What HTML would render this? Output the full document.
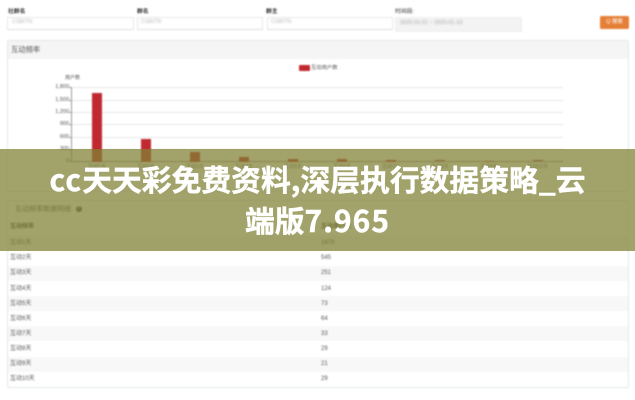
<!DOCTYPE html>
<html lang="zh">
<head>
<meta charset="utf-8">
<style>
html,body{margin:0;padding:0;width:635px;height:400px;overflow:hidden;background:#fff}
body{position:relative;font-family:"Liberation Sans","Noto Sans CJK SC",sans-serif}
#page{position:absolute;left:0;top:0;width:635px;height:400px;filter:blur(.7px);color:#555}
#page div,#page span{position:absolute;white-space:nowrap}
.lb{font-size:5.8px;font-weight:bold;color:#333;top:8px;line-height:7px}
.in{top:17px;height:11px;border:1px solid #e8e8e8;border-bottom:1px solid #dedede;background:#fff}
.ph{top:19px;font-size:5.5px;line-height:7px;color:#b5b5b5;filter:blur(.7px)}
.pn{left:7px;width:620px;border:1px solid #e4e6e6;border-radius:2px;box-sizing:content-box}
.g{left:72px;width:491px;height:1px;background:#e6e6e6}
.y{left:40px;width:29px;text-align:right;font-size:5.5px;line-height:7px;color:#555}
.t{left:69px;width:3px;height:1px;background:#999}
.b{width:10px;background:#c0292f}
.x{font-size:5px;line-height:6px;color:#777;width:40px;text-align:center;top:164px}
.r{left:8px;width:620px;height:15.2px}
.s{background:#f8f8f8}
.c1{left:10px;font-size:6px;line-height:7px;color:#555}
.c2{left:321px;font-size:6px;line-height:7px;color:#555}
#band{position:absolute;left:0;top:149px;width:635px;height:102px;background:rgba(127,129,52,.73)}
#title{position:absolute;left:0;top:158px;width:635px;text-align:center;color:#fff;font-weight:bold;font-size:29.8px;line-height:41px;font-family:"Noto Sans CJK SC","Liberation Sans",sans-serif;-webkit-text-stroke:.45px #fff;filter:blur(.3px)}
#title div{white-space:nowrap}
#title .w{letter-spacing:1.1px}
</style>
</head>
<body>
<div id="page">
  <div class="lb" style="left:8px;top:8.500px">社群名</div>
  <div class="lb" style="left:137px;top:8.500px">群名</div>
  <div class="lb" style="left:266px;top:8.500px">群主</div>
  <div class="lb" style="left:395px;top:8.500px;font-weight:normal">时间段:</div>
  <div class="in" style="left:7px;width:125px"></div>
  <div class="in" style="left:137px;width:124px"></div>
  <div class="in" style="left:267px;width:124px"></div>
  <div class="in" style="left:395px;width:125px;height:13px;background:#f3f3f3;border-color:#efefef"></div>
  <div class="ph" style="left:12px">CSBITN</div>
  <div class="ph" style="left:141px">CSBITN</div>
  <div class="ph" style="left:271px">CSBITN</div>
  <div class="ph" style="left:400px;top:20px;color:#a5a5a5">2020-01-01 ~ 2020-01-10</div>
  <div style="left:600px;top:16px;width:29px;height:13px;background:#e57f36;border-radius:1.5px;color:#fff;font-size:5.5px;line-height:13px;text-align:center">Q 搜索</div>

  <div class="pn" style="top:40px;height:150px"></div>
  <div style="left:8px;top:41px;width:620px;height:18px;background:#f5f5f5"></div>
  <div style="left:11px;top:45px;font-size:7.300px;line-height:10px;color:#555">互动频率</div>

  <div style="left:299px;top:65px;width:11px;height:6px;background:#c0292f;border-radius:1px"></div>
  <div style="left:311px;top:65px;font-size:5.300px;line-height:7px;color:#555">互动用户数</div>
  <div style="left:65px;top:75px;font-size:5px;line-height:7px;color:#555">用户数</div>

  <div class="g" style="top:87px"></div>
  <div class="g" style="top:100px"></div>
  <div class="g" style="top:112px"></div>
  <div class="g" style="top:124px"></div>
  <div class="g" style="top:137px"></div>
  <div class="g" style="top:149px"></div>
  <div class="g" style="top:161px;background:#999"></div>
  <div style="left:71px;top:87px;width:1px;height:75px;background:#999"></div>
  <div class="t" style="top:87px"></div><div class="t" style="top:100px"></div><div class="t" style="top:112px"></div><div class="t" style="top:124px"></div><div class="t" style="top:137px"></div><div class="t" style="top:149px"></div><div class="t" style="top:161px"></div>
  <div class="y" style="top:84px">1,800</div>
  <div class="y" style="top:97px">1,500</div>
  <div class="y" style="top:109px">1,200</div>
  <div class="y" style="top:121px">900</div>
  <div class="y" style="top:134px">600</div>
  <div class="y" style="top:146px">300</div>
  <div class="y" style="top:158px">0</div>

  <div class="b" style="left:92px;top:92.500px;height:69px"></div>
  <div class="b" style="left:141px;top:139px;height:22.500px"></div>
  <div class="b" style="left:190px;top:151.500px;height:10px"></div>
  <div class="b" style="left:239px;top:156.500px;height:5px"></div>
  <div class="b" style="left:288px;top:158.500px;height:3px"></div>
  <div class="b" style="left:337px;top:159px;height:2.500px"></div>
  <div class="b" style="left:386px;top:160px;height:1.500px"></div>
  <div class="b" style="left:435px;top:160.300px;height:1.200px"></div>
  <div class="b" style="left:484px;top:160.500px;height:1px"></div>
  <div class="b" style="left:533px;top:160.300px;height:1.200px"></div>

  <div class="x" style="left:77px">互动1天</div>
  <div class="x" style="left:126px">互动2天</div>
  <div class="x" style="left:175px">互动3天</div>
  <div class="x" style="left:224px">互动4天</div>
  <div class="x" style="left:273px">互动5天</div>
  <div class="x" style="left:322px">互动6天</div>
  <div class="x" style="left:371px">互动7天</div>
  <div class="x" style="left:420px">互动8天</div>
  <div class="x" style="left:469px">互动9天</div>
  <div class="x" style="left:518px">互动10天</div>

  <div class="pn" style="top:200px;height:186px"></div>
  <div style="left:15px;top:205px;font-size:7px;line-height:10px;color:#666">互动频率数据明细</div>
  <div style="left:75.500px;top:206px;width:6px;height:6px;border-radius:50%;background:#555;color:#fff;font-size:5px;line-height:6px;text-align:center">?</div>
  <div class="c1" style="top:223.500px;font-weight:bold;color:#444">互动频率</div>
  <div class="c2" style="top:223.500px;font-weight:bold;color:#444">互动用户数</div>

  <div class="r s" style="top:235px"></div>
  <div class="c1" style="top:240px">互动1天</div><div class="c2" style="top:240px">1679</div>
  <div class="c1" style="top:255px">互动2天</div><div class="c2" style="top:255px">545</div>
  <div class="r s" style="top:266px"></div>
  <div class="c1" style="top:270px">互动3天</div><div class="c2" style="top:270px">251</div>
  <div class="c1" style="top:285.500px">互动4天</div><div class="c2" style="top:285.500px">124</div>
  <div class="r s" style="top:296px"></div>
  <div class="c1" style="top:300.500px">互动5天</div><div class="c2" style="top:300.500px">73</div>
  <div class="c1" style="top:315.500px">互动6天</div><div class="c2" style="top:315.500px">64</div>
  <div class="r s" style="top:326px"></div>
  <div class="c1" style="top:330.500px">互动7天</div><div class="c2" style="top:330.500px">33</div>
  <div class="c1" style="top:345.500px">互动8天</div><div class="c2" style="top:345.500px">29</div>
  <div class="r s" style="top:357px"></div>
  <div class="c1" style="top:361px">互动9天</div><div class="c2" style="top:361px">21</div>
  <div class="c1" style="top:376px">互动10天</div><div class="c2" style="top:376px">29</div>
</div>
<div id="band"></div>
<div id="title"><div><span class="w">cc</span>天天彩免费资料,深层执行数据策略_云</div><div>端版<span class="w">7.965</span></div></div>
</body>
</html>
